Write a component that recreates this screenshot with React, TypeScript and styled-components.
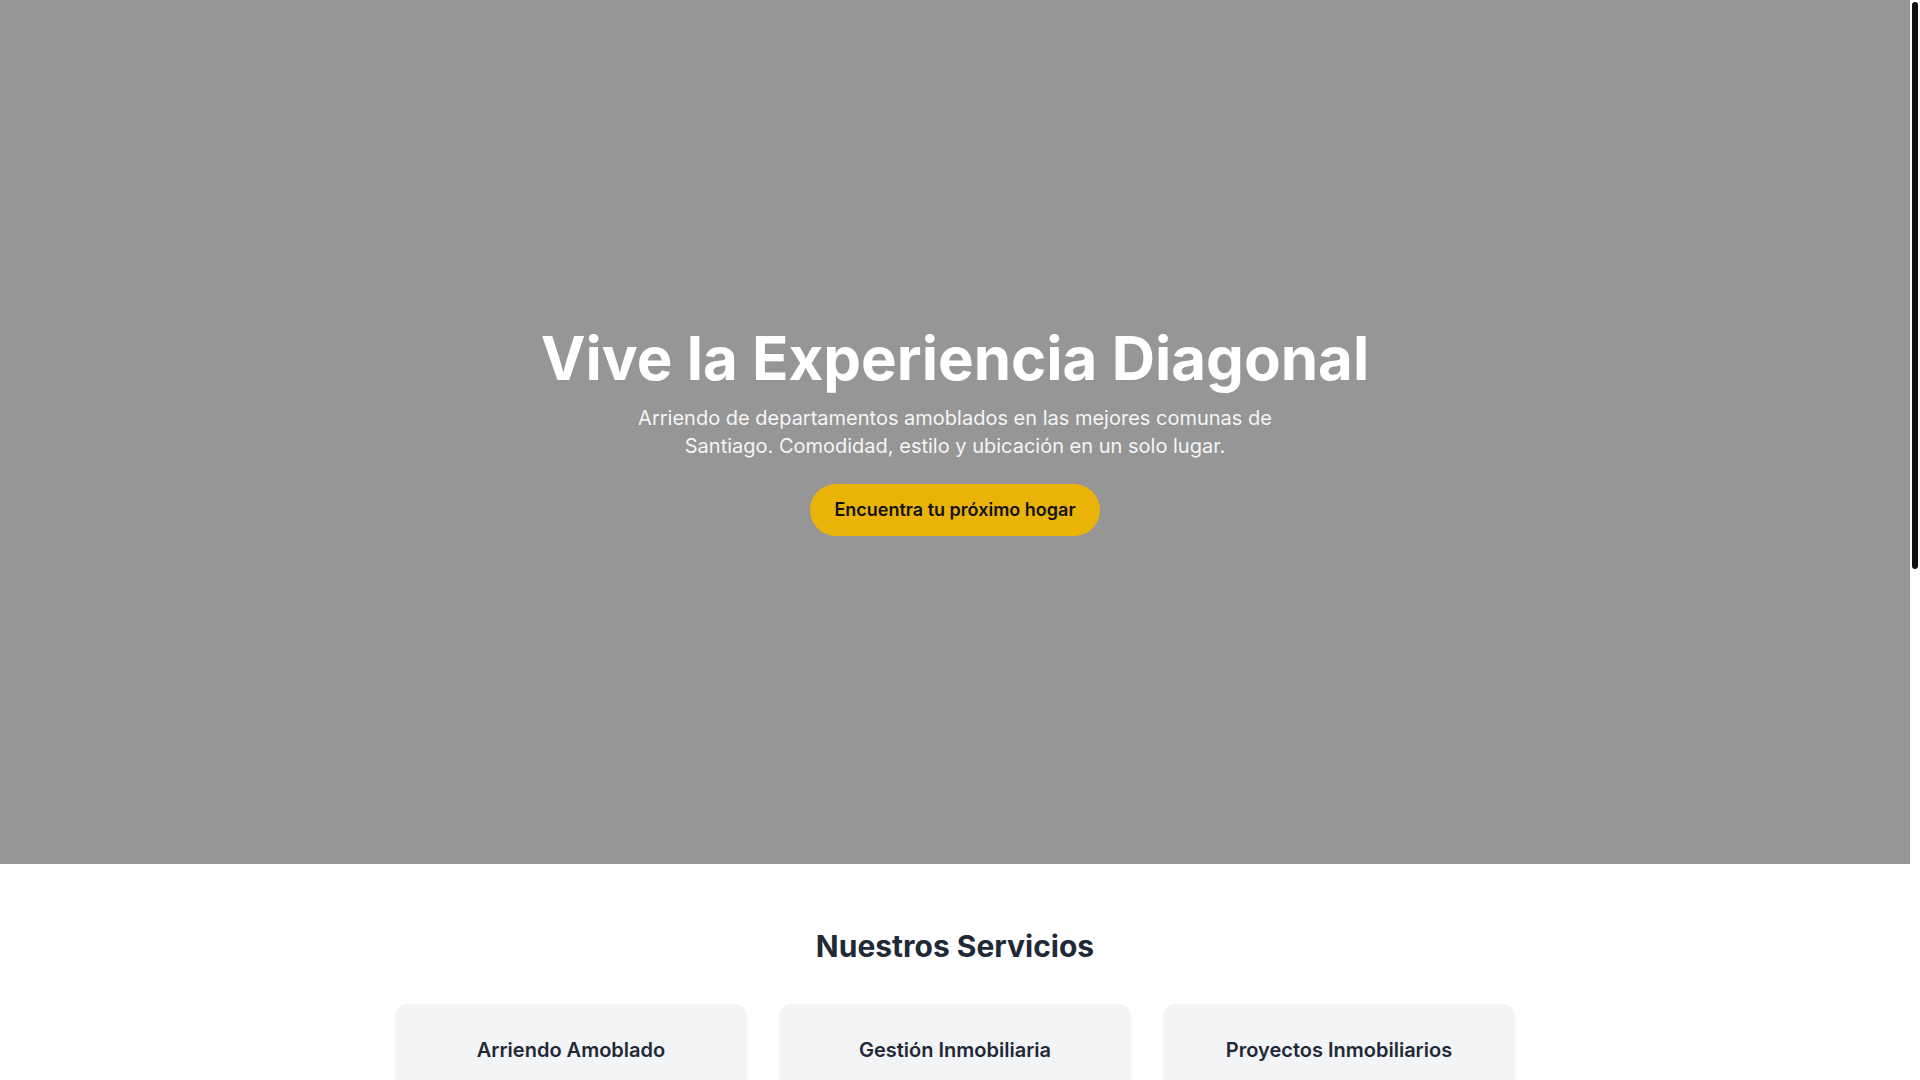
import React from "react";
import styled, { createGlobalStyle } from "styled-components";

const Global = createGlobalStyle`
  html, body { margin: 0; padding: 0; }
  body {
    font-family: Inter, "Noto Sans", Arial, sans-serif;
    background: #ffffff;
    color: #1f2937;
    -webkit-font-smoothing: antialiased;
  }
  *, *::before, *::after { box-sizing: border-box; }
`;

const Page = styled.div`
  display: flex;
  align-items: flex-start;
`;

const Main = styled.main`
  flex: 1;
  min-width: 0;
`;

const ScrollTrack = styled.div`
  position: sticky;
  top: 0;
  width: 10px;
  height: 100vh;
  flex: 0 0 10px;
  background: #ffffff;
  padding: 2px;
`;

const ScrollThumb = styled.div`
  width: 6px;
  height: 567px;
  background: #111111;
  border-radius: 3px;
`;

const Hero = styled.section`
  height: 80vh;
  background: #969696;
  display: flex;
  align-items: center;
  justify-content: center;
  text-align: center;
  padding: 0 16px;
`;

const HeroInner = styled.div`
  display: flex;
  flex-direction: column;
  align-items: center;
`;

const Title = styled.h1`
  margin: 0 0 16px;
  font-size: 60px;
  line-height: 1;
  font-weight: 700;
  color: #ffffff;
`;

const Subtitle = styled.p`
  margin: 0 0 24px;
  max-width: 672px;
  font-size: 20px;
  line-height: 28px;
  color: #f5f5f5;
`;

const CTA = styled.a`
  display: inline-block;
  background: #eab308;
  color: #111111;
  font-size: 18px;
  line-height: 28px;
  font-weight: 600;
  padding: 12px 24px;
  border-radius: 9999px;
  text-decoration: none;
  cursor: pointer;
`;

const Services = styled.section`
  padding: 64px 16px;
  background: #ffffff;
`;

const Container = styled.div`
  max-width: 1152px;
  margin: 0 auto;
  padding: 0 16px;
`;

const SectionTitle = styled.h2`
  margin: 0 0 40px;
  text-align: center;
  font-size: 30px;
  line-height: 36px;
  font-weight: 700;
  color: #1f2937;
`;

const Grid = styled.div`
  display: grid;
  grid-template-columns: repeat(3, 1fr);
  gap: 32px;
`;

const Card = styled.div`
  background: #f3f4f6;
  border-radius: 12px;
  padding: 32px;
  text-align: center;
`;

const CardTitle = styled.h3`
  margin: 0 0 16px;
  font-size: 20px;
  line-height: 28px;
  font-weight: 600;
  color: #1f2937;
`;

const CardText = styled.p`
  margin: 0;
  font-size: 16px;
  line-height: 24px;
  color: #4b5563;
`;

const Contact = styled.section`
  background: #f9fafb;
  padding: 64px 16px;
  text-align: center;
`;

const ContactText = styled.p`
  margin: 0 auto 24px;
  max-width: 672px;
  font-size: 18px;
  line-height: 28px;
  color: #4b5563;
`;

const Footer = styled.footer`
  background: #1f2937;
  color: #d1d5db;
  padding: 32px 16px;
  text-align: center;
  font-size: 14px;
  line-height: 20px;
`;

const services = [
  {
    title: "Arriendo Amoblado",
    text: "Departamentos completamente equipados, listos para vivir, con contratos flexibles y atención personalizada.",
  },
  {
    title: "Gestión Inmobiliaria",
    text: "Administramos tu propiedad de forma integral: arriendo, mantención, cobranza y cuidado de tu inversión.",
  },
  {
    title: "Proyectos Inmobiliarios",
    text: "Te asesoramos en la compra de departamentos en los mejores proyectos de Santiago.",
  },
];

export default function App() {
  return (
    <>
      <Global />
      <Page>
        <Main>
          <Hero>
            <HeroInner>
              <Title>Vive la Experiencia Diagonal</Title>
              <Subtitle>
                Arriendo de departamentos amoblados en las mejores comunas de
                Santiago. Comodidad, estilo y ubicación en un solo lugar.
              </Subtitle>
              <CTA>Encuentra tu próximo hogar</CTA>
            </HeroInner>
          </Hero>
          <Services>
            <Container>
              <SectionTitle>Nuestros Servicios</SectionTitle>
              <Grid>
                {services.map((s) => (
                  <Card key={s.title}>
                    <CardTitle>{s.title}</CardTitle>
                    <CardText>{s.text}</CardText>
                  </Card>
                ))}
              </Grid>
            </Container>
          </Services>
          <Contact>
            <Container>
              <SectionTitle>¿Listo para tu próximo hogar?</SectionTitle>
              <ContactText>
                Contáctanos y encuentra el departamento amoblado ideal para ti
                en Santiago.
              </ContactText>
              <CTA>Contáctanos</CTA>
            </Container>
          </Contact>
          <Footer>© 2024 Diagonal. Todos los derechos reservados.</Footer>
        </Main>
        <ScrollTrack aria-hidden="true">
          <ScrollThumb />
        </ScrollTrack>
      </Page>
    </>
  );
}
